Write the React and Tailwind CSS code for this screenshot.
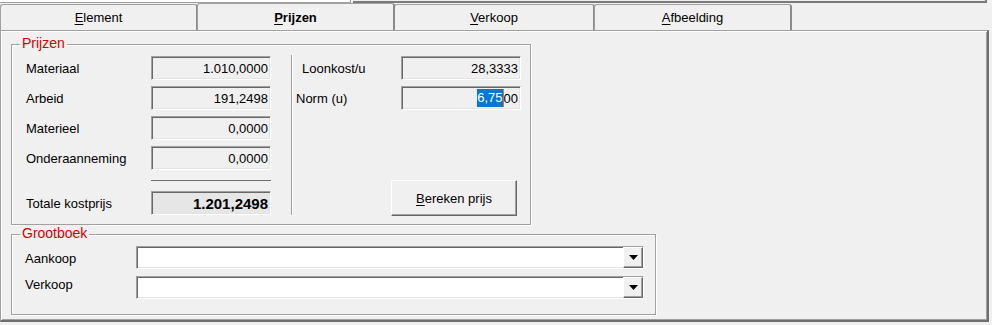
import React from "react";

const sunken =
  "border border-t-[#a0a0a0] border-l-[#a0a0a0] border-b-white border-r-white shadow-[inset_1px_1px_0_#696969,inset_-1px_-1px_0_#e3e3e3]";

function Field({ value, bold, dark }) {
  return (
    <div
      className={`h-[24px] w-[120px] ${sunken} flex items-center justify-end pr-[2px] ${dark ? "bg-[#e6e6e6]" : "bg-[#f0f0f0]"} ${bold ? "font-bold text-[15px]" : ""}`}
    >
      {value}
    </div>
  );
}

function Tab({ label, accel, rest, active, width }) {
  return (
    <div
      className={`${width} flex items-center justify-center -ml-px first:ml-0 rounded-t-[3px] border-t border-l border-[#a0a0a0] border-r-2 border-r-[#8a8a8a] bg-[#f0f0f0] ${active ? "relative z-10 h-[27px] font-bold -mt-px" : "h-[26px]"}`}
    >
      <span>
        <span className="underline underline-offset-2">{accel}</span>
        {rest}
      </span>
    </div>
  );
}

function Group({ title, className, children }) {
  return (
    <div
      className={`relative border border-[#a0a0a0] shadow-[inset_1px_1px_0_#fff,1px_1px_0_#fff] ${className}`}
    >
      <span className="absolute left-[8px] top-[-10px] bg-[#f0f0f0] px-[2px] text-[14px] leading-[16px] text-[#d00000]">
        {title}
      </span>
      {children}
    </div>
  );
}

function Combo() {
  return (
    <div className={`h-[23px] w-[508px] bg-white ${sunken} flex justify-end`}>
      <div className="h-full w-[20px] bg-[#f0f0f0] border border-t-white border-l-white border-b-[#696969] border-r-[#696969] shadow-[inset_-1px_-1px_0_#a0a0a0] flex items-center justify-center">
        <svg width="9" height="5" viewBox="0 0 9 5">
          <path d="M0 0h9L4.5 5z" fill="#000" />
        </svg>
      </div>
    </div>
  );
}

export default function App() {
  const rows = [
    ["Materiaal", "1.010,0000"],
    ["Arbeid", "191,2498"],
    ["Materieel", "0,0000"],
    ["Onderaanneming", "0,0000"],
  ];

  return (
    <div className="w-[992px] h-[325px] overflow-hidden bg-[#f0f0f0] text-[13px] leading-[15px] text-black font-['Liberation_Sans',Arial,sans-serif]">
      {/* strip of the controls above */}
      <div className="flex h-[3px]">
        <div className="w-[351px] bg-white border-b border-r border-[#a0a0a0]" />
        <div className="ml-[2px] w-[634px] border-b-2 border-r-2 border-[#7a7a7a]" />
      </div>

      {/* tabs */}
      <div className="mt-[1px] flex h-[26px] items-start">
        <Tab width="w-[198px]" accel="E" rest="lement" />
        <Tab width="w-[198px]" accel="P" rest="rijzen" active />
        <Tab width="w-[201px]" accel="V" rest="erkoop" />
        <Tab width="w-[198px]" accel="A" rest="fbeelding" />
      </div>

      {/* page */}
      <div className="h-[292px] w-[989px] border-t border-l border-[#a0a0a0] border-r-2 border-b-2 border-r-[#6f6f6f] border-b-[#6f6f6f] shadow-[inset_1px_1px_0_#fff,inset_-1px_-1px_0_#a0a0a0] pl-[10px] pt-[13px]">
        <Group title="Prijzen" className="w-[520px] h-[181px]">
          <div className="flex pt-[11px] pl-[14px]">
            <div className="flex flex-col gap-[6px] w-[245px]">
              {rows.map(([label, value]) => (
                <div key={label} className="flex items-center h-[24px]">
                  <span className="w-[125px]">{label}</span>
                  <Field value={value} />
                </div>
              ))}
              <div className="mt-[4px] ml-[125px] w-[120px] h-px bg-[#6f6f6f]" />
              <div className="mt-[4px] flex items-center h-[24px]">
                <span className="w-[125px]">Totale kostprijs</span>
                <Field value="1.201,2498" bold dark />
              </div>
            </div>

            <div className="ml-[20px] -mt-px h-[160px] w-px bg-[#a0a0a0] shadow-[1px_0_0_#fff]" />

            <div className="flex h-[160px] flex-col gap-[6px]">
              <div className="flex items-center h-[24px]">
                <span className="w-[109px] pl-[10px]">Loonkost/u</span>
                <Field value="28,3333" />
              </div>
              <div className="flex items-center h-[24px]">
                <span className="w-[109px] pl-[4px]">Norm (u)</span>
                <div className={`h-[24px] w-[120px] ${sunken} flex items-center justify-end pr-[2px] bg-[#f0f0f0]`}>
                  <span className="bg-[#0078d7] text-white leading-[18px]">6,75</span>
                  <span className="h-[18px] w-px bg-[#e8750a]" />
                  <span>00</span>
                </div>
              </div>
              <button className="mt-auto ml-[99px] h-[36px] w-[126px] bg-[#f0f0f0] border border-t-white border-l-white border-b-[#696969] border-r-[#696969] shadow-[inset_-1px_-1px_0_#a0a0a0]">
                <span className="underline underline-offset-2">B</span>ereken prijs
              </button>
            </div>
          </div>
        </Group>

        <Group title="Grootboek" className="mt-[9px] w-[645px] h-[81px]">
          <div className="flex flex-col gap-[7px] pt-[11px] pl-[13px]">
            <div className="flex items-start">
              <span className="w-[111px] pt-[5px]">Aankoop</span>
              <Combo />
            </div>
            <div className="flex items-start">
              <span className="w-[111px] pt-px">Verkoop</span>
              <Combo />
            </div>
          </div>
        </Group>
      </div>
    </div>
  );
}
